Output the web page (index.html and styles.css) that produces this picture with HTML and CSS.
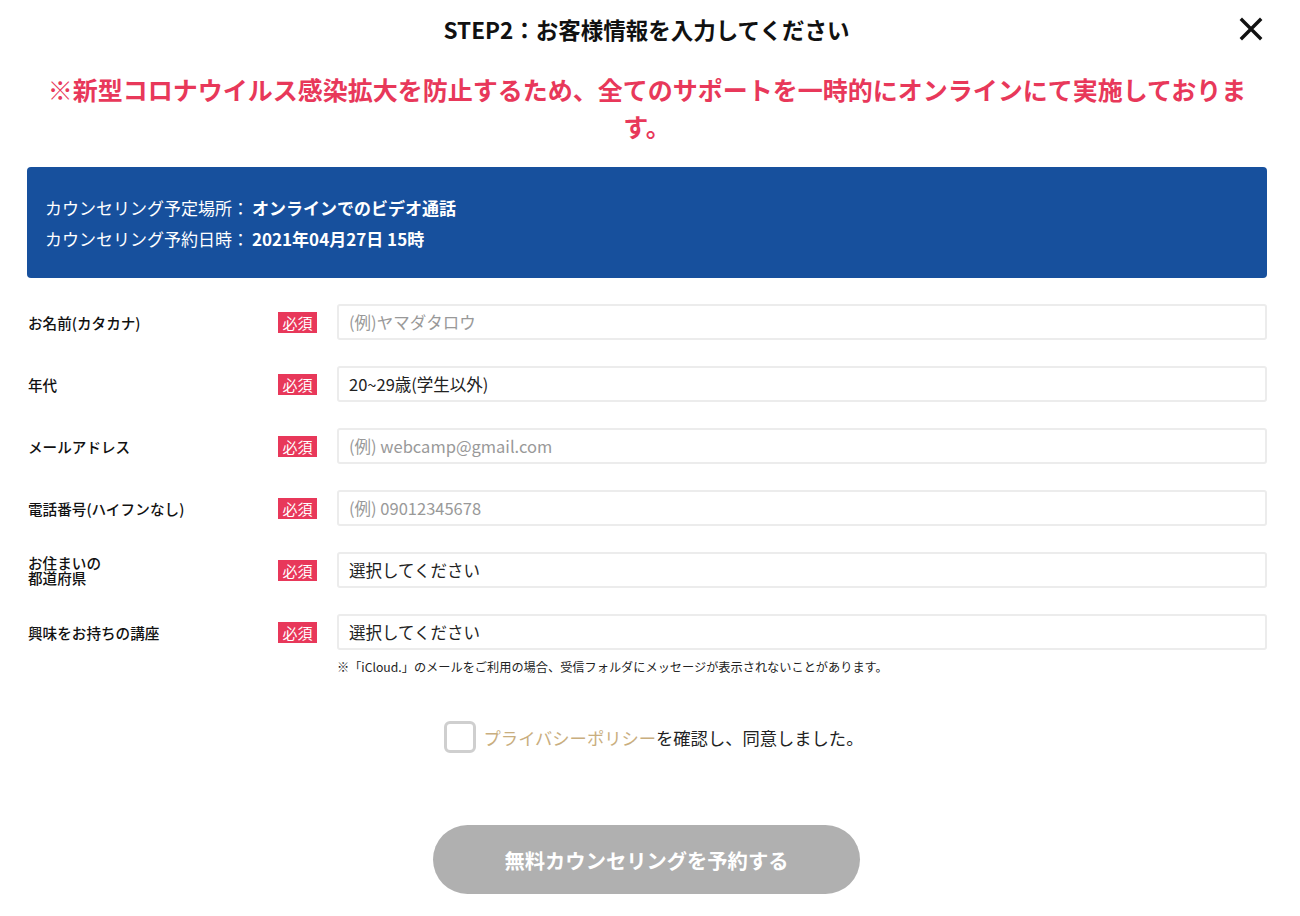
FILE: index.html
```html
<!DOCTYPE html>
<html lang="ja">
<head>
<meta charset="utf-8">
<title>STEP2</title>
<link rel="stylesheet" href="styles.css">
</head>
<body>
<div class="modal">
  <header class="head">
    <h1 class="title">STEP2：お客様情報を入力してください</h1>
    <button class="close" aria-label="閉じる">
      <svg width="24" height="24" viewBox="0 0 24 24"><path d="M3 3L21 21M21 3L3 21" stroke="#111" stroke-width="3.4" stroke-linecap="square"/></svg>
    </button>
  </header>
  <p class="notice">※新型コロナウイルス感染拡大を防止するため、全てのサポートを一時的にオンラインにて実施しております。</p>
  <div class="info">
    <div>カウンセリング予定場所：<b>オンラインでのビデオ通話</b></div>
    <div>カウンセリング予約日時：<b>2021年04月27日 15時</b></div>
  </div>
  <form class="form">
    <div class="row">
      <label class="label">お名前(カタカナ)</label>
      <span class="req">必須</span>
      <div class="field placeholder">(例)ヤマダタロウ</div>
    </div>
    <div class="row">
      <label class="label">年代</label>
      <span class="req">必須</span>
      <div class="field">20~29歳(学生以外)</div>
    </div>
    <div class="row">
      <label class="label">メールアドレス</label>
      <span class="req">必須</span>
      <div class="field placeholder">(例) webcamp@gmail.com</div>
    </div>
    <div class="row">
      <label class="label">電話番号(ハイフンなし)</label>
      <span class="req">必須</span>
      <div class="field placeholder">(例) 09012345678</div>
    </div>
    <div class="row">
      <label class="label two">お住まいの<br>都道府県</label>
      <span class="req">必須</span>
      <div class="field">選択してください</div>
    </div>
    <div class="row last">
      <label class="label">興味をお持ちの講座</label>
      <span class="req">必須</span>
      <div class="field">選択してください</div>
    </div>
    <p class="note">※「iCloud.」のメールをご利用の場合、受信フォルダにメッセージが表示されないことがあります。</p>
    <div class="agree">
      <span class="box"></span>
      <span class="agree-text"><span class="link">プライバシーポリシー</span>を確認し、同意しました。</span>
    </div>
    <div class="submit-wrap">
      <button type="button" class="submit">無料カウンセリングを予約する</button>
    </div>
  </form>
</div>
</body>
</html>
```

FILE: styles.css
```css
* { box-sizing: border-box; }
html, body { margin: 0; padding: 0; background: #fff; }
body {
  font-family: "Noto Sans CJK JP", "Noto Sans", sans-serif;
  color: #222;
}
.modal {
  width: 1240px;
  margin-left: 27px;
}
.head {
  position: relative;
  height: 60px;
  display: flex;
  align-items: center;
  justify-content: center;
}
.title {
  margin: 0;
  font-size: 22.5px;
  font-weight: 700;
  line-height: 30px;
  color: #111;
  padding-right: 1px;
  padding-bottom: 2px;
}
.close {
  position: absolute;
  right: 4px;
  top: 17px;
  width: 24px;
  height: 24px;
  padding: 0;
  border: 0;
  background: none;
  display: block;
}
.close svg { display: block; }
.notice {
  margin: 11px 0 0;
  padding: 0 14px;
  text-align: center;
  color: #e8385a;
  font-size: 25px;
  font-weight: 700;
  line-height: 37px;
}
.info {
  margin-top: 22px;
  background: #17509d;
  border-radius: 4px;
  color: #fff;
  padding: 25px 18px 24px;
  font-size: 17px;
  line-height: 31px;
}
.info b { font-weight: 700; margin-left: 3px; }
.form {
  margin-top: 26px;
  display: flex;
  flex-direction: column;
}
.row {
  display: flex;
  align-items: center;
  height: 36px;
  margin-bottom: 26px;
}
.row.last { margin-bottom: 0; }
.label {
  width: 251px;
  flex: none;
  font-size: 14.6px;
  font-weight: 500;
  color: #111;
  padding-left: 1px;
}
.label.two { line-height: 15px; }
.req {
  flex: none;
  width: 39px;
  height: 21px;
  background: #e8385a;
  color: #fff;
  font-size: 15px;
  line-height: 21px;
  text-align: center;
  margin-right: 20px;
}
.field {
  flex: 1;
  height: 36px;
  border: 2px solid #ececec;
  border-radius: 3px;
  padding: 0 10px;
  font-size: 16.5px;
  line-height: 32px;
  color: #222;
}
.field.placeholder { color: #999; }
.note {
  margin: 8px 0 0 310px;
  font-size: 12.2px;
  line-height: 18px;
  color: #222;
}
.agree {
  margin-top: 45px;
  display: flex;
  align-items: center;
  justify-content: center;
  gap: 8px;
  padding-left: 13px;
}
.box {
  width: 32px;
  height: 32px;
  border: 3px solid #cfcfcf;
  border-radius: 6px;
  background: #fff;
}
.agree-text {
  font-size: 17.3px;
  color: #222;
}
.link { color: #c9ae7e; }
.submit-wrap {
  margin-top: 72px;
  display: flex;
  justify-content: center;
  padding-right: 1px;
}
.submit {
  width: 427px;
  height: 69px;
  border: 0;
  border-radius: 35px;
  background: #b0b0b0;
  color: #fff;
  font-family: "Noto Sans CJK JP", "Noto Sans", sans-serif;
  font-size: 20.3px;
  font-weight: 700;
}
```
